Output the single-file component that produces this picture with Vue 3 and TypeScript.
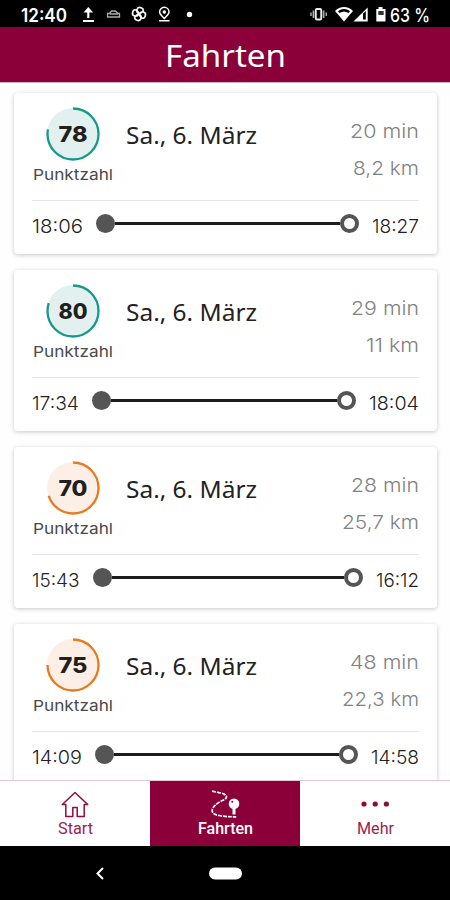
<script setup lang="ts">
import { h } from 'vue'

interface Trip {
  score: number
  tone: 'good' | 'fair'
  duration: [string, number]
  distance: [string, number]
  start: [string, number]
  end: [string, number]
}

// Single-line label whose glyphs are spread over a fixed width.
const FitText = (props: { text: string; w: number; h: number; base: number }) =>
  h('svg', { class: 'fit', width: props.w, height: props.h }, [
    h('text', { x: 0, y: props.base, textLength: props.w, lengthAdjust: 'spacingAndGlyphs' }, props.text),
  ])
FitText.props = ['text', 'w', 'h', 'base']

const trips: Trip[] = [
  { score: 78, tone: 'good', duration: ['20 min', 69], distance: ['8,2 km', 66], start: ['18:06', 51], end: ['18:27', 47] },
  { score: 80, tone: 'good', duration: ['29 min', 68], distance: ['11 km', 53], start: ['17:34', 47], end: ['18:04', 50] },
  { score: 70, tone: 'fair', duration: ['28 min', 68], distance: ['25,7 km', 77], start: ['15:43', 47.5], end: ['16:12', 43] },
  { score: 75, tone: 'fair', duration: ['48 min', 69], distance: ['22,3 km', 77], start: ['14:09', 50], end: ['14:58', 48] },
]
</script>

<template>
  <div class="phone">
    <div class="status">
      <FitText class="clock" text="12:40" :w="46" :h="27" :base="21.5" />
      <svg class="s-icons" width="120" height="27" viewBox="82 0 120 27" fill="none" stroke="#fff">
        <path d="M88.3 18V10M83 21h11" stroke-width="2.2" />
        <path d="M83.500 12.500l4.800-5.500 4.800 5.500z" fill="#fff" stroke="none" />
        <path d="M107.500 13.500h2l2-2.500h4l2.500 2.500h1.500v3.500h-12zM110 14h8" stroke="#aaa" stroke-width="1.300" />
        <g stroke-width="1.500">
          <path d="M139 14c-4-1-4-6 0-6 4 0 3 4 0 6zM139 14c1-4 6-4 6 0 0 4-4 3-6 0zM139 14c4 1 4 6 0 6-4 0-3-4 0-6zM139 14c-1 4-6 4-6 0 0-4 4-3 6 0z" transform="translate(139 14) rotate(18) scale(1.1) translate(-139 -14)" />
        </g>
        <path d="M164.300 18.500c-3-3-4.700-4.500-4.700-6.500a4.700 4.700 0 0 1 9.400 0c0 2-1.700 3.500-4.700 6.500zM159 20.700h10.600" stroke-width="1.500" />
        <circle cx="164.300" cy="12" r="1.800" fill="#fff" stroke="none" />
        <circle cx="189.500" cy="14.500" r="2.700" fill="#fff" stroke="none" />
      </svg>
      <svg class="s-right" width="78" height="27" viewBox="310 0 78 27">
        <rect x="315.800" y="9" width="5.400" height="10.500" rx="1" fill="none" stroke="#eee" stroke-width="1.800" />
        <path d="M313.500 10.500v7.500M323.600 10.500v7.500" stroke="#aaa" stroke-width="1.800" />
        <path d="M311 12.500v3.500M326.300 12.500v3.500" stroke="#aaa" stroke-width="1.500" />
        <path d="M335 11c5-5.500 13-5.500 18 0L344 21.500z" fill="#fff" />
        <path d="M338 11.200c4-3 8-3 12 0l-1.500 1.800c-3-2-6-2-9 0z" fill="#000" />
        <path d="M353.500 21.500L367.700 7.500v14z" fill="#fff" />
        <path d="M363 13.500l2.800-2.500v8.500H363z" fill="#000" />
        <path d="M376.300 9h2.200V7h4v2h3v12.500h-9.200z" fill="#fff" />
        <path d="M378.300 11h5.400v4h-5.400z" fill="#333" />
      </svg>
      <FitText class="battery" text="63 %" :w="40" :h="27" :base="21.5" />
    </div>

    <header class="header">
      <FitText class="title" text="Fahrten" :w="121" :h="55" :base="40" />
    </header>

    <main class="list">
      <article v-for="t in trips" :key="t.score" class="card">
        <div class="summary">
          <div class="score">
            <svg class="ring" :class="t.tone" width="54" height="54" viewBox="0 0 54 54">
              <circle class="fill" cx="27" cy="27" r="26" />
              <circle
                class="arc" cx="27" cy="27" r="25.500" pathLength="100"
                :stroke-dasharray="`${t.score} 100`" transform="rotate(-90 27 27)"
              />
              <text x="27" y="34.500" text-anchor="middle" textLength="29" lengthAdjust="spacingAndGlyphs">{{ t.score }}</text>
            </svg>
            <FitText class="caption" text="Punktzahl" :w="80" :h="24" :base="18.500" />
          </div>
          <FitText class="date" text="Sa., 6. März" :w="131" :h="70" :base="50.500" />
          <div class="stats">
            <FitText :text="t.duration[0]" :w="t.duration[1]" :h="37" :base="20" />
            <FitText :text="t.distance[0]" :w="t.distance[1]" :h="37" :base="20" />
          </div>
        </div>
        <div class="route">
          <FitText :text="t.start[0]" :w="t.start[1]" :h="48" :base="31.500" />
          <div class="track">
            <i class="dot"></i>
            <i class="line"></i>
            <i class="dot open"></i>
          </div>
          <FitText :text="t.end[0]" :w="t.end[1]" :h="48" :base="31.500" />
        </div>
      </article>
    </main>

    <nav class="tabs">
      <div class="tab">
        <svg width="30" height="30" viewBox="0 0 30 30" fill="none" stroke="#960b3e" stroke-width="1.500" stroke-linejoin="round">
          <path d="M15 2.500L2.300 14.500h3.500V26.500h7V17.500h4.400v9h7V14.500H27.700z" />
        </svg>
        <FitText text="Start" :w="35" :h="20" :base="12.500" />
      </div>
      <div class="tab active">
        <svg width="30" height="30" viewBox="0 0 30 30" fill="none" stroke="#fff" stroke-width="1.700">
          <path d="M2 1.200l7 1.500c4 .3 8 2.500 7.500 4.300-.5 2.500-3 2.800-6 4.500C6 14 2.500 17 2.200 20.500c0 3 3 4.500 7 5 5 1.200 10 1.300 17 1.300" stroke-dasharray="4 1" />
          <circle cx="24" cy="13.700" r="5.300" fill="#fff" stroke="none" />
          <path d="M24 18v6.500" stroke-width="3" />
          <circle cx="22.300" cy="11.800" r="1" fill="#8c003a" stroke="none" />
        </svg>
        <FitText text="Fahrten" :w="55" :h="20" :base="12.500" />
      </div>
      <div class="tab">
        <svg width="30" height="30" viewBox="0 0 30 30" fill="#8b1024">
          <circle cx="4" cy="14" r="2.600" /><circle cx="15.200" cy="14" r="2.600" /><circle cx="26.400" cy="14" r="2.600" />
        </svg>
        <FitText text="Mehr" :w="37" :h="20" :base="12.500" />
      </div>
    </nav>

    <div class="sysnav">
      <svg width="450" height="54" viewBox="0 0 450 54">
        <path d="M103 22l-5.500 5.500 5.500 5.500" fill="none" stroke="#fff" stroke-width="2" />
        <rect x="209" y="21.500" width="33" height="12" rx="6" fill="#fff" />
      </svg>
    </div>
  </div>
</template>

<style>
body { margin: 0; background: #000; }
</style>

<style scoped>
.phone {
  width: 450px;
  height: 900px;
  display: flex;
  flex-direction: column;
  overflow: hidden;
  background: #fff;
  font-family: Inter, "Noto Sans", sans-serif;
}
svg { display: block; flex: none; overflow: visible; }
.fit { display: block; flex: none; overflow: visible; fill: currentColor; }

.status {
  height: 27px;
  flex: none;
  display: flex;
  padding: 0 20px 0 21px;
  background: #000;
  color: #fff;
}
.clock { font-size: 18.5px; font-weight: 600; }
.s-icons { margin-left: 15px; }
.s-right { margin-left: auto; }
.battery { font-size: 18.5px; font-weight: 500; margin-left: 2px; }

.header {
  height: 56px;
  flex: none;
  display: flex;
  justify-content: center;
  background: #8c003a;
  border-bottom: 1px solid #ccb6c0;
  box-sizing: border-box;
  color: #fff;
}
.title { font-family: "Noto Sans", sans-serif; font-size: 31px; }

.list {
  flex: 1;
  min-height: 0;
  overflow: hidden;
  display: flex;
  flex-direction: column;
  gap: 16px;
  padding: 10px 13px 0 14px;
  background: #fefefe;
}
.card {
  height: 161px;
  flex: none;
  box-sizing: border-box;
  padding: 0 18px;
  border-radius: 4px;
  background: #fff;
  box-shadow: 0 1px 4px rgba(0, 0, 0, .22);
}
.summary {
  height: 108px;
  box-sizing: border-box;
  display: flex;
  align-items: flex-start;
  border-bottom: 1px solid #e6e6e6;
}
.score {
  width: 81px;
  padding-top: 14px;
  display: flex;
  flex-direction: column;
  align-items: center;
}
.ring text { font-size: 21px; font-weight: 800; fill: #202020; }
.arc { fill: none; stroke-width: 2.300; }
.good .fill { fill: #e2f1ef; }
.good .arc { stroke: #17998a; }
.fair .fill { fill: #fdefe6; }
.fair .arc { stroke: #e87a20; }
.caption { font-size: 15px; color: #4a4a4a; }
.date { margin-left: 13px; font-family: "Noto Sans", sans-serif; font-size: 24px; color: #222; }
.stats {
  margin-left: auto;
  padding-top: 25px;
  display: flex;
  flex-direction: column;
  align-items: flex-end;
  color: #828282;
  font-size: 18.500px;
  font-weight: 300;
}
.route {
  display: flex;
  gap: 13px;
  height: 48px;
  font-size: 18.500px;
  font-weight: 300;
  color: #222;
}
.track { flex: 1; height: 45px; display: flex; align-items: center; }
.dot {
  width: 19px;
  height: 19px;
  box-sizing: border-box;
  border-radius: 50%;
  background: #555;
}
.dot.open { background: #fff; border: 4.500px solid #555; }
.line { flex: 1; height: 3px; background: #1c1c1c; }

.tabs {
  height: 66px;
  flex: none;
  box-sizing: border-box;
  border-top: 1px solid #e5c5d1;
  display: grid;
  grid-template-columns: repeat(3, 1fr);
  background: #fff;
}
.tab {
  display: flex;
  flex-direction: column;
  align-items: center;
  padding-top: 9px;
  gap: 1px;
  font-family: Roboto, sans-serif;
  font-size: 16px;
  color: #9a2350;
}
.tab.active { background: #8c003a; color: #fff; font-weight: 500; }
.sysnav { height: 54px; flex: none; background: #000; }
</style>
